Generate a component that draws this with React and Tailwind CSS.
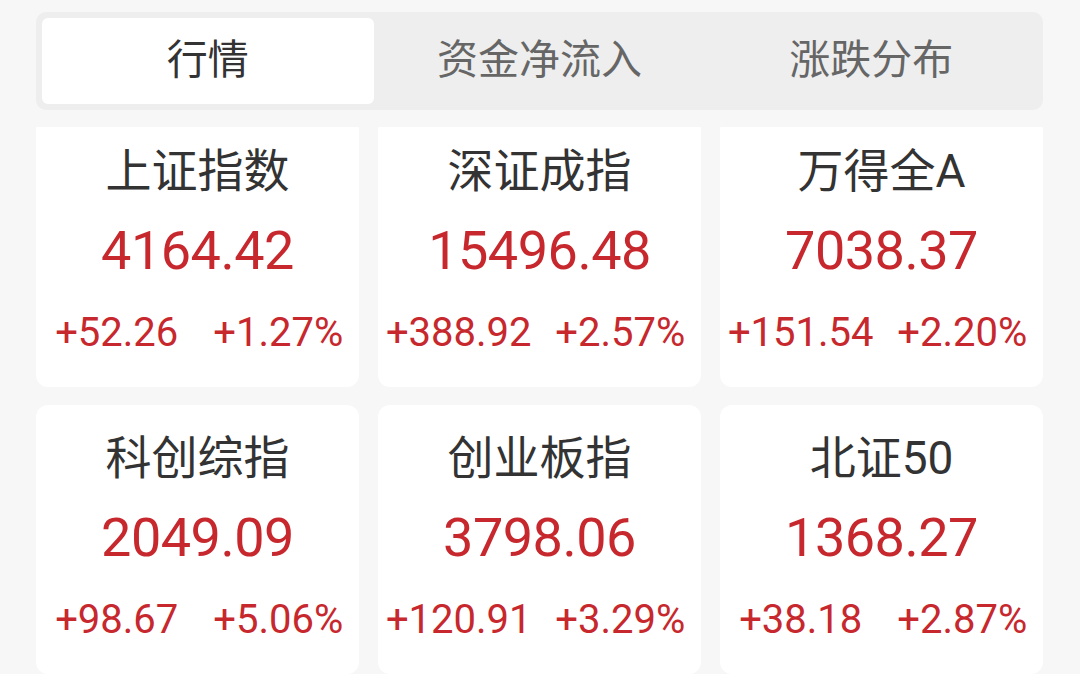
import { useState } from 'react'

const TABS = ['行情', '资金净流入', '涨跌分布']

const INDEXES = [
  { name: '上证指数', value: '4164.42', change: '+52.26', pct: '+1.27%' },
  { name: '深证成指', value: '15496.48', change: '+388.92', pct: '+2.57%' },
  { name: '万得全A', value: '7038.37', change: '+151.54', pct: '+2.20%' },
  { name: '科创综指', value: '2049.09', change: '+98.67', pct: '+5.06%' },
  { name: '创业板指', value: '3798.06', change: '+120.91', pct: '+3.29%' },
  { name: '北证50', value: '1368.27', change: '+38.18', pct: '+2.87%' },
]

const font = "font-['Roboto','Noto_Sans_CJK_SC',sans-serif]"

function IndexCard({ item }) {
  return (
    <div className="h-[269px] bg-white rounded-[12px] flex flex-col items-center pt-[30px]">
      <div className="h-[46px] leading-[46px] text-[46px] text-[#333333]">{item.name}</div>
      <div className="mt-[27px] h-[60px] leading-[60px] text-[54px] text-[#c7282d] tracking-[-0.5px]">{item.value}</div>
      <div className="mt-[32px] w-full grid grid-cols-2 h-[40px] leading-[40px] text-[40px] text-[#c7282d]">
        <span className="text-center">{item.change}</span>
        <span className="text-center">{item.pct}</span>
      </div>
    </div>
  )
}

export default function App() {
  const [tab, setTab] = useState(0)

  return (
    <div className={`${font} w-[1080px] h-[674px] overflow-hidden bg-[#f7f7f7] pl-[36px] pr-[37px] flex flex-col`}>
      <div className="mt-[12px] h-[98px] shrink-0 p-[6px] rounded-[10px] bg-[#eeeeee] flex">
        {TABS.map((t, i) => (
          <button key={t} onClick={() => setTab(i)}
            className={`flex-1 rounded-[6px] text-[41px] ${tab === i ? 'bg-white text-[#333333]' : 'text-[#666666]'}`}>
            {t}
          </button>
        ))}
      </div>
      <div className="mt-[17px] flex-1 overflow-hidden">
        <div className="-mt-[9px] grid grid-cols-3 gap-x-[19px] gap-y-[18px]">
          {INDEXES.map(item => <IndexCard key={item.name} item={item} />)}
        </div>
      </div>
    </div>
  )
}
